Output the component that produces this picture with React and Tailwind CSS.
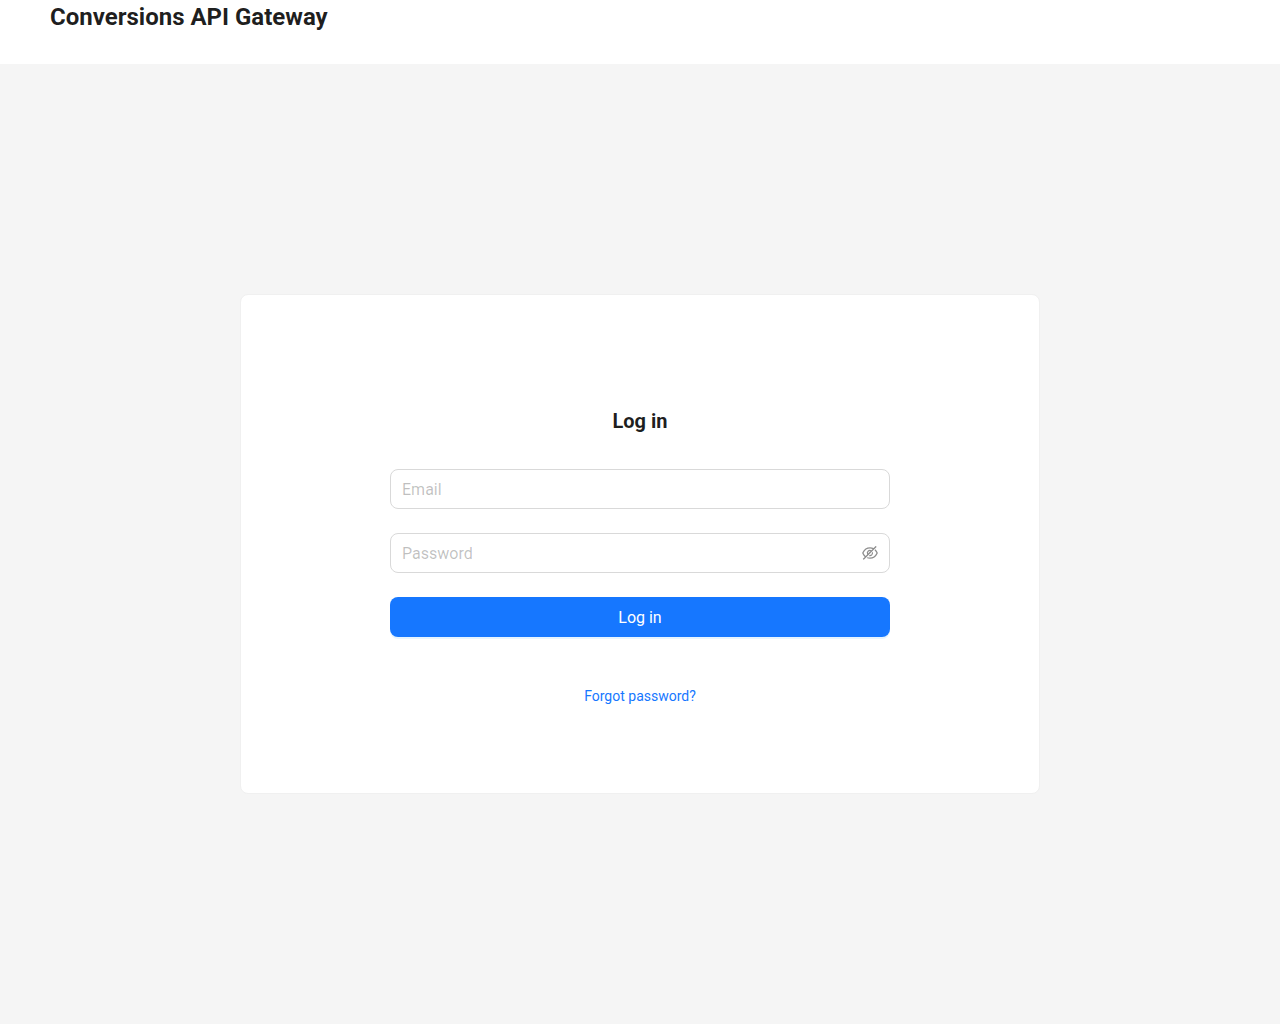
import { useState } from 'react';
import { AiOutlineEye, AiOutlineEyeInvisible } from 'react-icons/ai';

const fieldClass =
  'h-10 w-full rounded-lg border border-[#d9d9d9] bg-white px-[11px] text-base text-black/88 outline-none placeholder:text-black/25 hover:border-[#4096ff] focus:border-[#1677ff]';

export default function App() {
  const [email, setEmail] = useState('');
  const [password, setPassword] = useState('');
  const [showPassword, setShowPassword] = useState(false);

  const EyeIcon = showPassword ? AiOutlineEye : AiOutlineEyeInvisible;

  const handleSubmit = (e) => {
    e.preventDefault();
  };

  return (
    <div className="flex min-h-screen flex-col bg-[#f5f5f5] font-['Roboto',sans-serif] text-sm text-black/88">
      <header className="h-16 bg-white px-[50px]">
        <h1 className="text-2xl leading-[34px] font-bold">Conversions API Gateway</h1>
      </header>

      <main className="flex flex-1 items-center justify-center p-6">
        <section className="flex min-h-[500px] w-full max-w-[800px] flex-col items-center rounded-lg border border-[#f0f0f0] bg-white px-6 pt-[112px] pb-20">
          <h2 className="text-xl leading-7 font-bold">Log in</h2>

          {/* Login form */}
          <form onSubmit={handleSubmit} className="mt-[34px] flex w-full max-w-[500px] flex-col gap-6">
            <input
              type="email"
              aria-label="Email"
              placeholder="Email"
              value={email}
              onChange={(e) => setEmail(e.target.value)}
              className={fieldClass}
            />
            <div className="flex h-10 items-center rounded-lg border border-[#d9d9d9] bg-white px-[11px] hover:border-[#4096ff] focus-within:border-[#1677ff]">
              <input
                type={showPassword ? 'text' : 'password'}
                aria-label="Password"
                placeholder="Password"
                value={password}
                onChange={(e) => setPassword(e.target.value)}
                className="h-full min-w-0 flex-1 text-base outline-none placeholder:text-black/25"
              />
              <button
                type="button"
                onClick={() => setShowPassword(!showPassword)}
                aria-label={showPassword ? 'Hide password' : 'Show password'}
                className="cursor-pointer text-black/45 hover:text-black/88"
              >
                {/* tighter viewBox trims the glyph's built-in margin */}
                <EyeIcon size={16} viewBox="64 64 896 896" />
              </button>
            </div>
            <button
              type="submit"
              className="h-10 cursor-pointer rounded-lg bg-[#1677ff] text-base leading-[25px] text-white shadow-[0_2px_0_rgba(5,145,255,0.1)] hover:bg-[#4096ff]"
            >
              Log in
            </button>
          </form>

          <a href="#forgot-password" className="mt-12 leading-[22px] text-[#1677ff] hover:text-[#69b1ff]">
            Forgot password?
          </a>
        </section>
      </main>
    </div>
  );
}
